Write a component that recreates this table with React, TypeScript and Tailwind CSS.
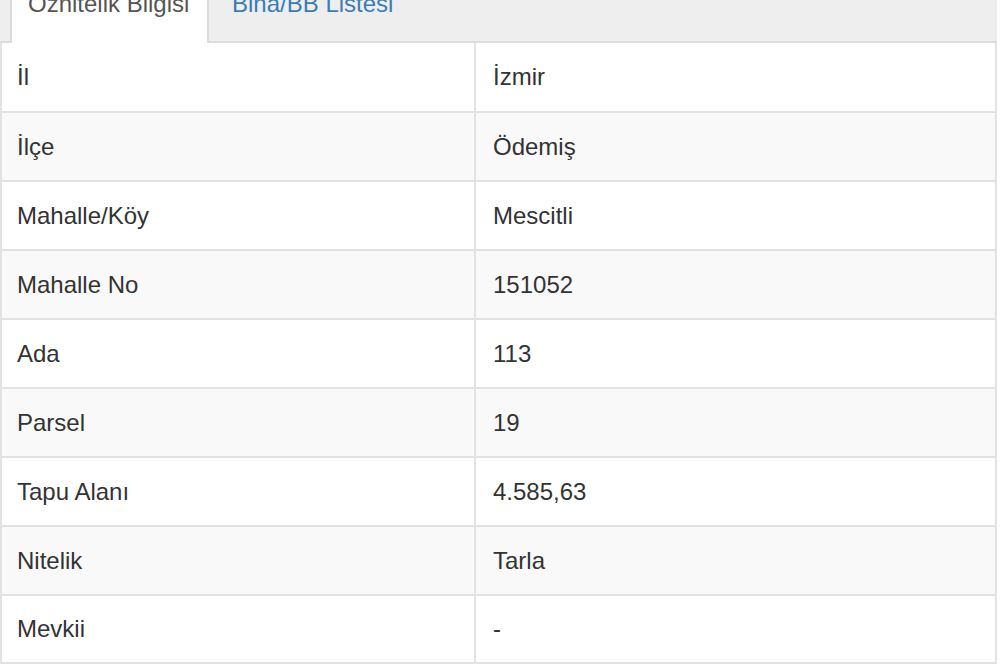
import React from "react";

const rows: [string, string, string][] = [
  ["İl", "İzmir", "h-[70px]"],
  ["İlçe", "Ödemiş", "h-[69px]"],
  ["Mahalle/Köy", "Mescitli", "h-[69px]"],
  ["Mahalle No", "151052", "h-[69px]"],
  ["Ada", "113", "h-[69px]"],
  ["Parsel", "19", "h-[69px]"],
  ["Tapu Alanı", "4.585,63", "h-[69px]"],
  ["Nitelik", "Tarla", "h-[69px]"],
  ["Mevkii", "-", "h-[68px]"],
];

export default function App() {
  return (
    <div className="w-[1000px] h-[664px] overflow-hidden bg-white font-['Liberation_Sans',Arial,sans-serif] text-[24px] text-[#333]">
      <div className="w-[997px]">
        <div className="h-[43px] bg-[#eeeeee] border-b-2 border-[#dcdcdc] flex items-start pl-[10px]">
          <div className="w-[199px] h-[43px] bg-white border-l-2 border-r-2 border-[#dcdcdc] pl-[16px] overflow-hidden">
            <span className="block -mt-[8px] leading-[24px] text-[#555] whitespace-nowrap">Öznitelik Bilgisi</span>
          </div>
          <div className="pl-[23px] overflow-hidden h-[41px]">
            <span className="block -mt-[8px] leading-[24px] text-[#3a7db6] whitespace-nowrap">Bina/BB Listesi</span>
          </div>
        </div>
        <div className="border-l-2 border-r-2 border-[#e2e2e2]">
          {rows.map(([k, v, h], i) => (
            <div
              key={k}
              className={`flex ${h} border-b-2 border-[#e2e2e2] ${i % 2 === 1 ? "bg-[#f9f9f9]" : "bg-white"}`}
            >
              <div className="w-[474px] flex items-center pl-[15px] border-r-2 border-[#e2e2e2] whitespace-nowrap">
                {k}
              </div>
              <div className="flex-1 flex items-center pl-[17px] whitespace-nowrap">{v}</div>
            </div>
          ))}
        </div>
      </div>
    </div>
  );
}
